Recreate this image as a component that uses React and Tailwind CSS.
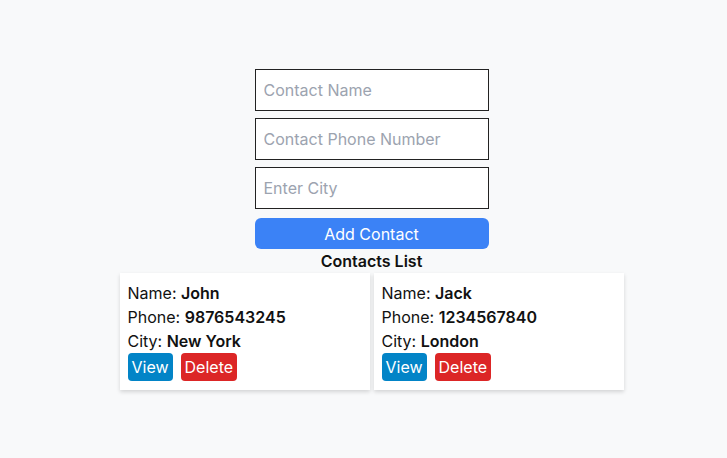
import React, {useState} from 'react';

const initialContacts = [
    {name: 'John', phone: '9876543245', city: 'New York'},
    {name: 'Jack', phone: '1234567840', city: 'London'},
];

function App() {
    const [name, setName] = useState('');
    const [phone, setPhone] = useState('');
    const [city, setCity] = useState('');
    const [contacts, setContacts] = useState(initialContacts);

    const addContact = () => {
        if (!name || !phone || !city) return;
        setContacts([...contacts, {name, phone, city}]);
        setName('');
        setPhone('');
        setCity('');
    };

    const removeContact = (i) => {
        setContacts(contacts.filter((_, idx) => idx !== i));
    };

    return (
        <div className="min-h-screen bg-[#f8f9fa] pt-[69px] pl-4 text-[#111] font-['Inter',sans-serif]">
            <div className="w-[234px] mx-auto flex flex-col gap-[7px]">
                <input
                    type="text"
                    value={name}
                    onChange={(e) => setName(e.target.value)}
                    placeholder="Contact Name"
                    className="h-[42px] w-full px-2 border border-[#222] bg-white text-base placeholder:text-[#9ca3af] outline-none"
                />
                <input
                    type="text"
                    value={phone}
                    onChange={(e) => setPhone(e.target.value)}
                    placeholder="Contact Phone Number"
                    className="h-[42px] w-full px-2 border border-[#222] bg-white text-base placeholder:text-[#9ca3af] outline-none"
                />
                <input
                    type="text"
                    value={city}
                    onChange={(e) => setCity(e.target.value)}
                    placeholder="Enter City"
                    className="h-[42px] w-full px-2 border border-[#222] bg-white text-base placeholder:text-[#9ca3af] outline-none"
                />
                <button
                    onClick={addContact}
                    className="mt-[2px] h-[31px] w-full rounded-md bg-[#3b82f6] text-white text-base"
                >
                    Add Contact
                </button>
            </div>
            <h2 className="text-center font-semibold text-base leading-6 mt-0">Contacts List</h2>
            <div className="flex justify-center gap-1">
                {contacts.map((c, i) => (
                    <div key={i} className="w-[250px] bg-white px-2 pt-2 pb-[9px] shadow-[0_2px_4px_rgba(0,0,0,0.15)] text-base leading-6">
                        <div>Name: <span className="font-semibold">{c.name}</span></div>
                        <div>Phone: <span className="font-semibold">{c.phone}</span></div>
                        <div>City: <span className="font-semibold">{c.city}</span></div>
                        <div className="flex gap-2">
                            <button className="px-1 py-0.5 rounded bg-[#0284c7] text-white">View</button>
                            <button onClick={() => removeContact(i)} className="px-1 py-0.5 rounded bg-[#dc2626] text-white">Delete</button>
                        </div>
                    </div>
                ))}
            </div>
        </div>
    );
}

export default App;
